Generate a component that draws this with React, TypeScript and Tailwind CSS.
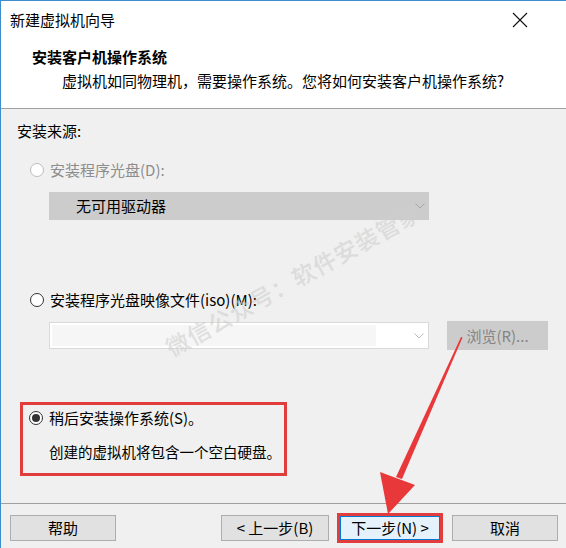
const font = { fontFamily: '"Noto Sans CJK SC", "Microsoft YaHei", sans-serif' };

function Radio({ state }: { state: "disabled" | "off" | "on" }) {
  const border = state === "disabled" ? "border-[#bcbcbc]" : "border-[#333333]";
  return (
    <span
      className={`w-[14px] h-[14px] rounded-full border ${border} bg-white flex items-center justify-center shrink-0`}
    >
      {state === "on" && <span className="w-[8px] h-[8px] rounded-full bg-[#333333]" />}
    </span>
  );
}

function Chevron({ color }: { color: string }) {
  return (
    <svg width="10" height="6" viewBox="0 0 10 6" className="shrink-0">
      <path d="M0.5 0.5 L5 5 L9.5 0.5" fill="none" stroke={color} strokeWidth="1" />
    </svg>
  );
}

function Button({ label, w, className = "" }: { label: string; w: string; className?: string }) {
  return (
    <div
      className={`${w} h-[26px] bg-[#e1e1e1] border border-[#adadad] flex items-center justify-center text-[15px] text-black ${className}`}
    >
      {label}
    </div>
  );
}

export default function App() {
  return (
    <div
      className="relative w-[566px] h-[548px] overflow-hidden bg-[#f0f0f0] border-l border-t border-[#3d8ccb] text-black leading-[20px]"
      style={font}
    >
      {/* title + header */}
      <div className="bg-white h-[107px]">
        <div className="h-[38px] pl-[9px] pr-[38px] flex items-center justify-between">
          <span className="text-[15px]">新建虚拟机向导</span>
          <svg width="16" height="16" viewBox="0 0 16 16">
            <path d="M1 1 L15 15 M15 1 L1 15" stroke="#111" strokeWidth="1.1" />
          </svg>
        </div>
        <div className="mt-[8px] pl-[31px] text-[15px] font-bold">安装客户机操作系统</div>
        <div className="mt-[4px] pl-[61px] text-[15px]">
          虚拟机如同物理机，需要操作系统。您将如何安装客户机操作系统?
        </div>
      </div>
      <div className="h-px bg-[#a0a0a0]" />

      {/* body */}
      <div className="pl-[16px] pt-[12px] text-[15px]">安装来源:</div>

      <div className="mt-[19px] pl-[29px] flex items-center gap-[6px] text-[15px] text-[#8d8d8d]">
        <Radio state="disabled" />
        <span>安装程序光盘(D):</span>
      </div>
      <div className="mt-[12px] ml-[48px] w-[380px] h-[28px] bg-[#cccccc] flex items-center justify-between pl-[27px] pr-[4px] text-[15px]">
        <span>无可用驱动器</span>
        <Chevron color="#a8a8a8" />
      </div>

      <div className="mt-[70px] pl-[29px] flex items-center gap-[6px] text-[15px]">
        <Radio state="off" />
        <span>安装程序光盘映像文件(iso)(M):</span>
      </div>
      <div className="mt-[11px] ml-[48px] flex items-center gap-[18px]">
        <div className="w-[380px] h-[27px] bg-white border border-[#d9d9d9] flex items-center justify-between pl-[2px] pr-[4px]">
          <div className="w-[324px] h-[21px] bg-[#f6f6f6]" />
          <Chevron color="#bdbdbd" />
        </div>
        <div className="w-[101px] h-[29px] bg-[#cccccc] flex items-center justify-center text-[15px] text-[#858585]">
          浏览(R)...
        </div>
      </div>

      <div className="mt-[52px] ml-[19px] w-[267px] h-[74px] border-[3px] border-[#e23d3d] pl-[6px] pt-[3px] text-[15px] whitespace-nowrap">
        <div className="flex items-center gap-[6px]">
          <Radio state="on" />
          <span>稍后安装操作系统(S)。</span>
        </div>
        <div className="mt-[14px] pl-[20px] text-[14.5px]">创建的虚拟机将包含一个空白硬盘。</div>
      </div>

      {/* footer */}
      <div className="mt-[27px] h-px bg-[#a0a0a0]" />
      <div className="pt-[11px] pl-[9px] flex items-center">
        <Button label="帮助" w="w-[106px]" />
        <Button label="< 上一步(B)" w="w-[108px]" className="ml-[105px]" />
        <div className="ml-[8px] border-[3px] border-[#e23d3d] -mt-[2px] -mb-[2px]">
          <div className="w-[100px] h-[24px] bg-[#e5f1fb] border border-[#0078d7] flex items-center justify-center text-[15px]">
            下一步(N) &gt;
          </div>
        </div>
        <Button label="取消" w="w-[106px]" className="ml-[9px]" />
      </div>

      {/* watermark */}
      <div
        className="absolute left-[292px] top-[278px] -translate-x-1/2 -translate-y-1/2 -rotate-[29deg] whitespace-nowrap text-[23px] font-medium tracking-[1px] text-[#cfcfcf] opacity-60 pointer-events-none"
        style={{ fontFamily: '"Noto Sans CJK SC", serif' }}
      >
        微信公众号：软件安装管家
      </div>

      {/* red arrow */}
      <svg className="absolute left-0 top-0 pointer-events-none" width="566" height="548" viewBox="0 0 566 548">
        <polygon points="460,336 461.5,336.5 401,478 395,476" fill="#e8383a" />
        <polygon points="387,513 379,471 414,484" fill="#e8383a" />
      </svg>
    </div>
  );
}
